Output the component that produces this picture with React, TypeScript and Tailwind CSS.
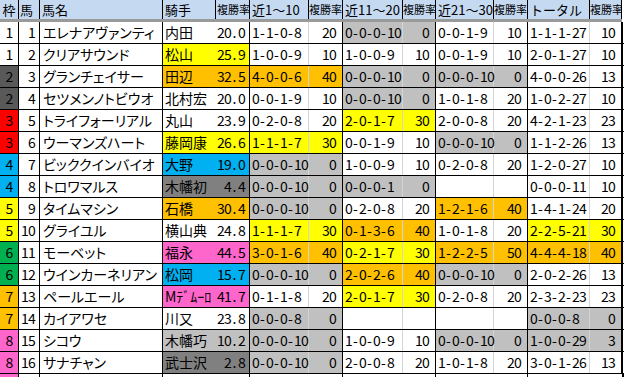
import React from "react";

const Y = "#ffff00";
const O = "#ffc000";
const G = "#c0c0c0";
const W = "#ffffff";
const B = "#00b0f0";
const D = "#808080";
const P = "#ff66cc";

const waku: Record<number, string> = {
  1: "#ffffff",
  2: "#595959",
  3: "#ff0000",
  4: "#00b0f0",
  5: "#ffff00",
  6: "#00b050",
  7: "#ffc000",
  8: "#ff66cc",
};

type Rec = [string, string, string];
type Row = { w: number; n: number; name: string; j: string; jr: string; jc: string; r: Rec[] };

const E: Rec = ["", "", W];

const rows: Row[] = [
  { w: 1, n: 1, name: "エレナアヴァンティ", j: "内田", jr: "20.0", jc: W, r: [["1-1-0-8", "20", W], ["0-0-0-10", "0", G], ["0-0-1-9", "10", W], ["1-1-1-27", "10", W]] },
  { w: 1, n: 2, name: "クリアサウンド", j: "松山", jr: "25.9", jc: Y, r: [["1-0-0-9", "10", W], ["1-0-0-9", "10", W], ["0-0-1-9", "10", W], ["2-0-1-27", "10", W]] },
  { w: 2, n: 3, name: "グランチェイサー", j: "田辺", jr: "32.5", jc: O, r: [["4-0-0-6", "40", O], ["0-0-0-10", "0", G], ["0-0-0-10", "0", G], ["4-0-0-26", "13", W]] },
  { w: 2, n: 4, name: "セツメンノトビウオ", j: "北村宏", jr: "20.0", jc: W, r: [["0-0-1-9", "10", W], ["0-0-0-10", "0", G], ["1-0-1-8", "20", W], ["1-0-2-27", "10", W]] },
  { w: 3, n: 5, name: "トライフォーリアル", j: "丸山", jr: "23.9", jc: W, r: [["0-2-0-8", "20", W], ["2-0-1-7", "30", Y], ["2-0-0-8", "20", W], ["4-2-1-23", "23", W]] },
  { w: 3, n: 6, name: "ウーマンズハート", j: "藤岡康", jr: "26.6", jc: Y, r: [["1-1-1-7", "30", Y], ["0-0-1-9", "10", W], ["0-0-0-10", "0", G], ["1-1-2-26", "13", W]] },
  { w: 4, n: 7, name: "ビッククインバイオ", j: "大野", jr: "19.0", jc: B, r: [["0-0-0-10", "0", G], ["1-0-0-9", "10", W], ["0-2-0-8", "20", W], ["1-2-0-27", "10", W]] },
  { w: 4, n: 8, name: "トロワマルス", j: "木幡初", jr: "4.4", jc: D, r: [["0-0-0-10", "0", G], ["0-0-0-1", "0", G], E, ["0-0-0-11", "10", W]] },
  { w: 5, n: 9, name: "タイムマシン", j: "石橋", jr: "30.4", jc: O, r: [["0-0-0-10", "0", G], ["0-2-0-8", "20", W], ["1-2-1-6", "40", O], ["1-4-1-24", "20", W]] },
  { w: 5, n: 10, name: "グライユル", j: "横山典", jr: "24.8", jc: W, r: [["1-1-1-7", "30", Y], ["0-1-3-6", "40", O], ["1-0-1-8", "20", W], ["2-2-5-21", "30", Y]] },
  { w: 6, n: 11, name: "モーベット", j: "福永", jr: "44.5", jc: P, r: [["3-0-1-6", "40", O], ["0-2-1-7", "30", Y], ["1-2-2-5", "50", O], ["4-4-4-18", "40", O]] },
  { w: 6, n: 12, name: "ウインカーネリアン", j: "松岡", jr: "15.7", jc: B, r: [["0-0-0-10", "0", G], ["2-0-2-6", "40", O], ["0-0-0-10", "0", G], ["2-0-2-26", "13", W]] },
  { w: 7, n: 13, name: "ペールエール", j: "Mﾃﾞﾑｰﾛ", jr: "41.7", jc: P, r: [["0-1-1-8", "20", W], ["2-0-1-7", "30", Y], ["0-2-0-8", "20", W], ["2-3-2-23", "23", W]] },
  { w: 7, n: 14, name: "カイアワセ", j: "川又", jr: "23.8", jc: W, r: [["0-0-0-8", "0", G], E, E, ["0-0-0-8", "0", G]] },
  { w: 8, n: 15, name: "シコウ", j: "木幡巧", jr: "10.2", jc: G, r: [["0-0-0-10", "0", G], ["1-0-0-9", "10", W], ["0-0-0-10", "0", G], ["1-0-0-29", "3", G]] },
  { w: 8, n: 16, name: "サナチャン", j: "武士沢", jr: "2.8", jc: D, r: [["0-0-0-10", "0", G], ["2-0-0-8", "20", W], ["1-0-1-8", "20", W], ["3-0-1-26", "13", W]] },
];

const recW = ["w-[59px]", "w-[60px]", "w-[58px]", "w-[62px]"];
const rateW = ["w-[34px]", "w-[33px]", "w-[34px]", "w-[32px]"];
const headRec = ["近1～10", "近11～20", "近21～30", "トータル"];

const cell = "h-full shrink-0 overflow-hidden whitespace-nowrap border-r border-black";

function M({ t }: { t: string }) {
  return (
    <>
      {t.split("").map((c, i) => (
        <span key={i} className="inline-block w-[7px] text-center">
          {c}
        </span>
      ))}
    </>
  );
}

export default function App() {
  return (
    <div className="w-[625px] h-[377px] overflow-hidden bg-white text-black font-['Noto_Sans_CJK_JP',sans-serif]">
      {/* header */}
      <div className="flex h-[22px] border-b-[3px] border-[#9a9a9a] bg-[#c5d9f1] text-[13px] leading-[19px] w-[622px]">
        <div className={`${cell} w-[19px] border-[#404040] text-center`}>枠</div>
        <div className={`${cell} w-[21px] border-[#404040] pl-[1px]`}>馬</div>
        <div className={`${cell} w-[123px] border-[#404040] pl-[2px]`}>馬名</div>
        <div className={`${cell} w-[53px] border-[#404040] pl-[2px]`}>騎手</div>
        <div className={`${cell} w-[34px] border-[#404040] pl-[1px] text-[11px]`}>複勝率</div>
        {headRec.map((h, i) => (
          <React.Fragment key={h}>
            <div className={`${cell} ${recW[i]} border-[#404040] pl-[2px]`}>{h}</div>
            <div className={`${cell} ${rateW[i]} border-[#404040] pl-[0px] text-[11px]`}>複勝率</div>
          </React.Fragment>
        ))}
      </div>
      {/* body */}
      {rows.map((r) => (
        <div key={r.n} className="flex h-[22px] border-b border-black text-[14px] leading-[21px] w-[624px]">
          <div className={`${cell} w-[19px] text-center`} style={{ backgroundColor: waku[r.w] }}>
            <M t={String(r.w)} />
          </div>
          <div className={`${cell} w-[21px] text-right pr-[4px]`}>
            <M t={String(r.n)} />
          </div>
          <div className={`${cell} w-[123px] pl-[3px] [font-feature-settings:'palt']`}>{r.name}</div>
          <div className="flex h-full shrink-0 border-r border-black" style={{ backgroundColor: r.jc }}>
            <div className="h-full w-[53px] overflow-hidden whitespace-nowrap pl-[2px] [font-feature-settings:'palt']">{r.j}</div>
            <div className="h-full w-[33px] text-right pr-[4px] whitespace-nowrap">
              <M t={r.jr} />
            </div>
          </div>
          {r.r.map((rc, i) => (
            <div
              key={i}
              className={`flex h-full shrink-0 border-r-black ${i === 3 ? "border-r-2" : "border-r"}`}
              style={{ backgroundColor: rc[2] }}
            >
              <div className={`h-full ${recW[i]} border-r border-[#d4d4d4] pl-[2px] whitespace-nowrap`}>
                <M t={rc[0]} />
              </div>
              <div className={`h-full ${i === 3 ? "w-[31px]" : i === 1 ? "w-[32px]" : "w-[33px]"} text-right pr-[6px] whitespace-nowrap`}>
                <M t={rc[1]} />
              </div>
            </div>
          ))}
        </div>
      ))}
      {/* partial next row */}
      <div className="flex h-[22px] w-[624px]">
        <div className={`${cell} w-[19px]`} style={{ backgroundColor: "#ff66cc" }} />
        <div className={`${cell} w-[21px]`} />
        <div className={`${cell} w-[123px]`} />
        <div className={`${cell} w-[87px]`} />
        <div className={`${cell} w-[93px]`} />
        <div className={`${cell} w-[93px]`} />
        <div className={`${cell} w-[92px]`} />
        <div className={`${cell} w-[96px] border-r-2`} />
      </div>
    </div>
  );
}
